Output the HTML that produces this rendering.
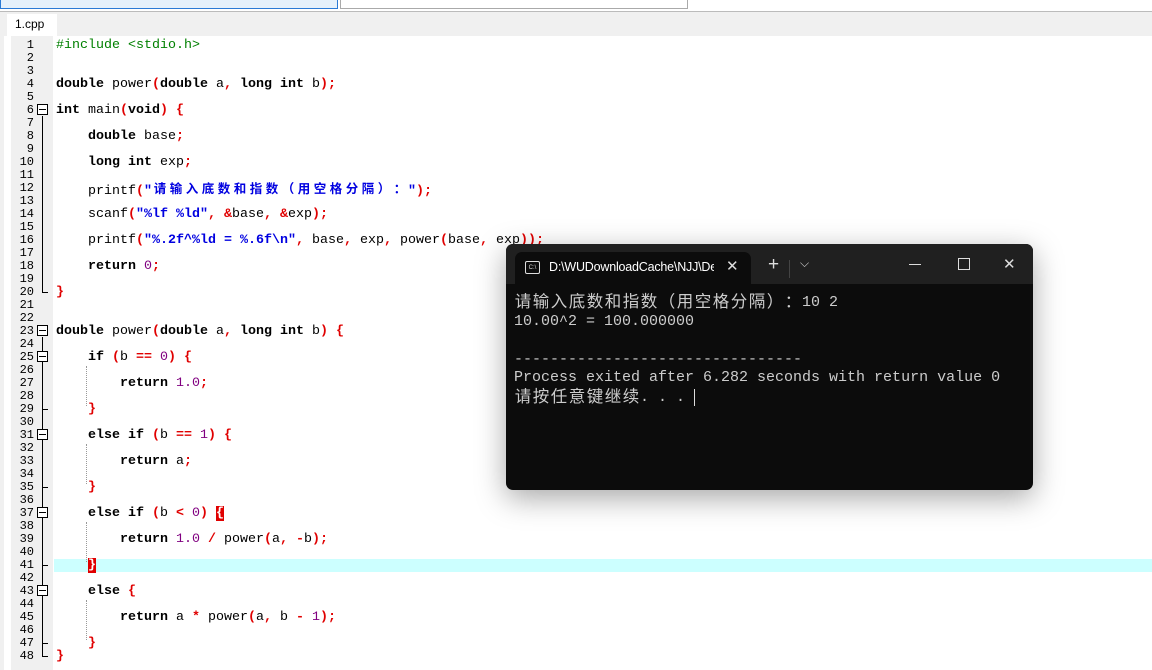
<!DOCTYPE html>
<html><head><meta charset="utf-8"><style>
body{margin:0;width:1152px;height:670px;overflow:hidden;background:#fff;position:relative;font-family:"Liberation Mono",monospace}
.a{position:absolute}
.ln{position:absolute;left:14px;width:20px;text-align:right;font-size:12px;height:13px;line-height:13px;color:#000}
.cd{position:absolute;left:56px;font-size:13.33px;height:13px;line-height:13px;white-space:pre;color:#000}
b{font-weight:bold}
.r{color:#e00000;font-weight:bold}.n{color:#800080}.s{color:#0000e0;font-weight:bold}.g{color:#008000}
.fb{position:absolute;left:37px;width:9px;height:9px;border:1px solid #000;background:#fff}
.fb:after{content:"";position:absolute;left:1px;right:1px;top:4px;height:1px;background:#000}
.term{font-family:"Liberation Mono","Noto Sans CJK SC",monospace;color:#ccc;font-size:15px;line-height:18px;position:absolute;left:8px;white-space:pre}
.cj{display:inline-block;text-align:center;font-family:"Noto Sans CJK SC",sans-serif;position:relative}
.term .cj{width:18px;font-size:16.5px;line-height:18px;top:1px}
.cd .cj{width:16px;font-size:12.5px;line-height:13px;top:-1px}
</style></head><body>
<div class="a" style="left:0;top:0;width:336px;height:8px;border:1px solid #2a7ad5;border-top:none;background:#e5f1fb"></div>
<div class="a" style="left:340px;top:0;width:346px;height:8px;border:1px solid #aaa;border-top:none;background:#fff"></div>
<div class="a" style="left:0;top:11px;width:1152px;height:1px;background:#bbb"></div>
<div class="a" style="left:0;top:12px;width:1152px;height:24px;background:#f0f0f0"></div>
<div class="a" style="left:7px;top:14px;width:50px;height:22px;background:#fff;font-family:'Liberation Sans',sans-serif;font-size:12px;line-height:20px;padding-left:8px;box-sizing:border-box">1.cpp</div>
<div class="a" style="left:0;top:36px;width:4px;height:634px;background:#f0f0f0"></div>
<div class="a" style="left:11px;top:36px;width:42px;height:634px;background:#f0f0f0"></div>
<div class="a" style="left:54px;top:559px;width:1098px;height:13px;background:#ccffff"></div>
<div class="a" style="left:42px;top:116px;width:1px;height:177px;background:#000"></div>
<div class="a" style="left:42px;top:292px;width:6px;height:1px;background:#000"></div>
<div class="a" style="left:42px;top:337px;width:1px;height:320px;background:#000"></div>
<div class="a" style="left:42px;top:656px;width:6px;height:1px;background:#000"></div>
<div class="a" style="left:42px;top:409px;width:6px;height:1px;background:#000"></div>
<div class="a" style="left:42px;top:487px;width:6px;height:1px;background:#000"></div>
<div class="a" style="left:42px;top:565px;width:6px;height:1px;background:#000"></div>
<div class="a" style="left:42px;top:643px;width:6px;height:1px;background:#000"></div>
<div class="fb" style="top:104px"></div><div class="fb" style="top:325px"></div><div class="fb" style="top:351px"></div><div class="fb" style="top:429px"></div><div class="fb" style="top:507px"></div><div class="fb" style="top:585px"></div>
<div class="a" style="left:86px;top:366px;border-left:1px dotted #999;height:40px"></div>
<div class="a" style="left:86px;top:444px;border-left:1px dotted #999;height:40px"></div>
<div class="a" style="left:86px;top:522px;border-left:1px dotted #999;height:40px"></div>
<div class="a" style="left:86px;top:600px;border-left:1px dotted #999;height:40px"></div>
<div class="ln" style="top:39px">1</div><div class="ln" style="top:52px">2</div><div class="ln" style="top:65px">3</div><div class="ln" style="top:78px">4</div><div class="ln" style="top:91px">5</div><div class="ln" style="top:104px">6</div><div class="ln" style="top:117px">7</div><div class="ln" style="top:130px">8</div><div class="ln" style="top:143px">9</div><div class="ln" style="top:156px">10</div><div class="ln" style="top:169px">11</div><div class="ln" style="top:182px">12</div><div class="ln" style="top:195px">13</div><div class="ln" style="top:208px">14</div><div class="ln" style="top:221px">15</div><div class="ln" style="top:234px">16</div><div class="ln" style="top:247px">17</div><div class="ln" style="top:260px">18</div><div class="ln" style="top:273px">19</div><div class="ln" style="top:286px">20</div><div class="ln" style="top:299px">21</div><div class="ln" style="top:312px">22</div><div class="ln" style="top:325px">23</div><div class="ln" style="top:338px">24</div><div class="ln" style="top:351px">25</div><div class="ln" style="top:364px">26</div><div class="ln" style="top:377px">27</div><div class="ln" style="top:390px">28</div><div class="ln" style="top:403px">29</div><div class="ln" style="top:416px">30</div><div class="ln" style="top:429px">31</div><div class="ln" style="top:442px">32</div><div class="ln" style="top:455px">33</div><div class="ln" style="top:468px">34</div><div class="ln" style="top:481px">35</div><div class="ln" style="top:494px">36</div><div class="ln" style="top:507px">37</div><div class="ln" style="top:520px">38</div><div class="ln" style="top:533px">39</div><div class="ln" style="top:546px">40</div><div class="ln" style="top:559px">41</div><div class="ln" style="top:572px">42</div><div class="ln" style="top:585px">43</div><div class="ln" style="top:598px">44</div><div class="ln" style="top:611px">45</div><div class="ln" style="top:624px">46</div><div class="ln" style="top:637px">47</div><div class="ln" style="top:650px">48</div>

<div class="cd g" style="top:39px">#include &lt;stdio.h&gt;</div>
<div class="cd" style="top:78px"><b>double</b> power<span class="r">(</span><b>double</b> a<span class="r">,</span> <b>long int</b> b<span class="r">);</span></div>
<div class="cd" style="top:104px"><b>int</b> main<span class="r">(</span><b>void</b><span class="r">)</span> <span class="r">{</span></div>
<div class="cd" style="top:130px">    <b>double</b> base<span class="r">;</span></div>
<div class="cd" style="top:156px">    <b>long int</b> exp<span class="r">;</span></div>
<div class="cd" style="top:182px">    printf<span class="r">(</span><span class="s">"<span class="cj">请</span><span class="cj">输</span><span class="cj">入</span><span class="cj">底</span><span class="cj">数</span><span class="cj">和</span><span class="cj">指</span><span class="cj">数</span><span class="cj">（</span><span class="cj">用</span><span class="cj">空</span><span class="cj">格</span><span class="cj">分</span><span class="cj">隔</span><span class="cj">）</span><span class="cj">：</span>"</span><span class="r">);</span></div>
<div class="cd" style="top:208px">    scanf<span class="r">(</span><span class="s">"%lf %ld"</span><span class="r">,</span> <span class="r">&amp;</span>base<span class="r">,</span> <span class="r">&amp;</span>exp<span class="r">);</span></div>
<div class="cd" style="top:234px">    printf<span class="r">(</span><span class="s">"%.2f^%ld = %.6f\n"</span><span class="r">,</span> base<span class="r">,</span> exp<span class="r">,</span> power<span class="r">(</span>base<span class="r">,</span> exp<span class="r">));</span></div>
<div class="cd" style="top:260px">    <b>return</b> <span class="n">0</span><span class="r">;</span></div>
<div class="cd" style="top:286px"><span class="r">}</span></div>
<div class="cd" style="top:325px"><b>double</b> power<span class="r">(</span><b>double</b> a<span class="r">,</span> <b>long int</b> b<span class="r">)</span> <span class="r">{</span></div>
<div class="cd" style="top:351px">    <b>if</b> <span class="r">(</span>b <span class="r">==</span> <span class="n">0</span><span class="r">)</span> <span class="r">{</span></div>
<div class="cd" style="top:377px">        <b>return</b> <span class="n">1.0</span><span class="r">;</span></div>
<div class="cd" style="top:403px">    <span class="r">}</span></div>
<div class="cd" style="top:429px">    <b>else if</b> <span class="r">(</span>b <span class="r">==</span> <span class="n">1</span><span class="r">)</span> <span class="r">{</span></div>
<div class="cd" style="top:455px">        <b>return</b> a<span class="r">;</span></div>
<div class="cd" style="top:481px">    <span class="r">}</span></div>
<div class="cd" style="top:507px">    <b>else if</b> <span class="r">(</span>b <span class="r">&lt;</span> <span class="n">0</span><span class="r">)</span> <span style="background:#e00000;color:#fff;font-weight:bold">{</span></div>
<div class="cd" style="top:533px">        <b>return</b> <span class="n">1.0</span> <span class="r">/</span> power<span class="r">(</span>a<span class="r">,</span> <span class="r">-</span>b<span class="r">);</span></div>
<div class="cd" style="top:559px">    <span style="background:#e00000;color:#fff;font-weight:bold">}</span></div>
<div class="cd" style="top:585px">    <b>else</b> <span class="r">{</span></div>
<div class="cd" style="top:611px">        <b>return</b> a <span class="r">*</span> power<span class="r">(</span>a<span class="r">,</span> b <span class="r">-</span> <span class="n">1</span><span class="r">);</span></div>
<div class="cd" style="top:637px">    <span class="r">}</span></div>
<div class="cd" style="top:650px"><span class="r">}</span></div>

<div class="a" style="left:506px;top:244px;width:527px;height:246px;background:#0c0c0c;border-radius:7px;box-shadow:0 8px 30px rgba(0,0,0,.35);overflow:hidden">
  <div class="a" style="left:0;top:0;width:527px;height:40px;background:#202020"></div>
  <div class="a" style="left:9px;top:8px;width:236px;height:32px;background:#0c0c0c;border-radius:7px 7px 0 0"></div>
  <div class="a" style="left:19px;top:17px;width:13px;height:11px;border:1px solid #ddd;border-radius:2px;font-size:6px;color:#ddd;line-height:12px;text-align:center;font-family:'Liberation Sans'">C:\</div>
  <div class="a" style="left:43px;top:16px;width:165px;overflow:hidden;white-space:nowrap;color:#fff;font-family:'Liberation Sans',sans-serif;font-size:12.5px;letter-spacing:-0.2px">D:\WUDownloadCache\NJJ\Dev</div>
  <div class="a" style="left:220px;top:13px;color:#ddd;font-family:'Liberation Sans';font-size:15px">✕</div>
  <div class="a" style="left:262px;top:10px;color:#ddd;font-family:'Liberation Sans';font-size:19px">+</div>
  <div class="a" style="left:283px;top:16px;width:1px;height:18px;background:#444"></div>
  <div class="a" style="left:294px;top:12px;color:#ccc;font-family:'Liberation Sans';font-size:12px">⌵</div>
  <div class="a" style="left:403px;top:20px;width:12px;height:1px;background:#ddd"></div>
  <div class="a" style="left:452px;top:14px;width:10px;height:10px;border:1px solid #ddd"></div>
  <div class="a" style="left:497px;top:11px;color:#ddd;font-family:'Liberation Sans';font-size:15px">✕</div>
  <div class="term" style="top:46px"><span class="cj">请</span><span class="cj">输</span><span class="cj">入</span><span class="cj">底</span><span class="cj">数</span><span class="cj">和</span><span class="cj">指</span><span class="cj">数</span><span class="cj">（</span><span class="cj">用</span><span class="cj">空</span><span class="cj">格</span><span class="cj">分</span><span class="cj">隔</span><span class="cj">）</span><span class="cj">：</span>10 2</div>
  <div class="term" style="top:69px">10.00^2 = 100.000000</div>
  <div class="term" style="top:107px">--------------------------------</div>
  <div class="term" style="top:125px">Process exited after 6.282 seconds with return value 0</div>
  <div class="term" style="top:141px"><span class="cj">请</span><span class="cj">按</span><span class="cj">任</span><span class="cj">意</span><span class="cj">键</span><span class="cj">继</span><span class="cj">续</span>. . . <span style="display:inline-block;width:1px;height:17px;background:#ddd;vertical-align:middle"></span></div>
</div>
</body></html>
